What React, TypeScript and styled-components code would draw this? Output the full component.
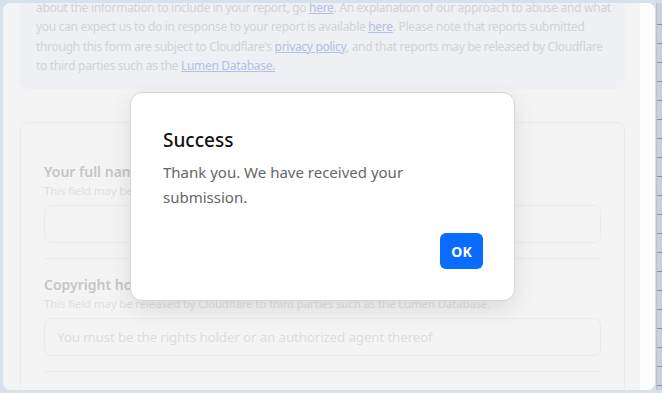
import styled, { createGlobalStyle } from "styled-components";

const GlobalStyle = createGlobalStyle`
	html, body {
		margin: 0;
		padding: 0;
		background: #d7e1ea;
		font-family: "Noto Sans", "Open Sans", sans-serif;
	}
`;

const Frame = styled.div`
	height: 393px;
	box-sizing: border-box;
	padding: 3px 0 3px 3px;
	display: flex;
	gap: 1px;
`;

const Window = styled.div`
	flex: 1;
	display: flex;
	background: #fdfdfd;
	border-radius: 8px;
	overflow: hidden;
	position: relative;
`;

const Page = styled.div`
	flex: 1;
	background: #f4f4f4;
	padding: 0 15px 0 17px;
	overflow: hidden;
`;

const ScrollTrack = styled.div`
	width: 15px;
	background: #fdfdfd;
`;

const Ruler = styled.div`
	width: 5px;
	background: repeating-linear-gradient(
		to bottom,
		#c8d2dc 0,
		#c8d2dc 18px,
		#8a9099 18px,
		#8a9099 19px
	);
	background-position: 0 3px;
	border-left: 1px solid #b9c3cd;
`;

const InfoCard = styled.div`
	margin-top: -22px;
	background: #eef0f3;
	border-radius: 8px;
	padding: 17px 16px 14px;
	color: #d3d3d3;
	font-size: 12px;
	letter-spacing: -0.3px;
	line-height: 19.3px;
	white-space: nowrap;
`;

const Link = styled.a`
	color: #b3bfe6;
	text-decoration: underline;
`;

const FormCard = styled.div`
	margin-top: 33px;
	border: 1px solid #ebebeb;
	border-radius: 8px;
	padding: 22px 23px 40px;
`;

const Field = styled.div`
	padding: 17px 0 15px;
	border-bottom: 1px solid #ebebeb;

	& + & {
		padding-top: 16px;
	}
`;

const Label = styled.div`
	font-size: 14px;
	line-height: 20px;
	font-weight: 600;
	color: #c6c6c6;
`;

const Hint = styled.div`
	font-size: 11.5px;
	letter-spacing: -0.15px;
	line-height: 17px;
	color: #dedede;
`;

const Input = styled.div`
	margin-top: 6px;
	height: 36px;
	border: 1px solid #ebebeb;
	border-radius: 7px;
	padding: 0 12px;
	display: flex;
	align-items: center;
	font-size: 13.4px;
	letter-spacing: -0.15px;
	color: #dddddd;
`;

const Modal = styled.div`
	position: absolute;
	left: 127px;
	top: 89px;
	width: 385px;
	height: 209px;
	box-sizing: border-box;
	background: #ffffff;
	border: 1px solid #d4d4d4;
	border-radius: 12px;
	box-shadow: 0 8px 24px rgba(0, 0, 0, 0.1);
	padding: 33px 31px 31px 32px;
	display: flex;
	flex-direction: column;
`;

const Title = styled.h2`
	margin: 0;
	font-size: 19px;
	line-height: 28px;
	font-weight: 500;
	color: #111111;
`;

const Message = styled.p`
	margin: 6px 0 0;
	font-size: 15px;
	line-height: 25px;
	color: #666666;
	max-width: 300px;
`;

const Actions = styled.div`
	margin-top: auto;
	display: flex;
	justify-content: flex-end;
`;

const OkButton = styled.button`
	width: 43px;
	height: 36px;
	border: none;
	border-radius: 6px;
	background: #0a6cff;
	color: #ffffff;
	font-family: inherit;
	font-size: 14px;
	font-weight: 700;
	cursor: pointer;
`;

const App = () => {
	return (
		<>
			<GlobalStyle />
			<Frame>
				<Window>
					<Page>
						<InfoCard>
							about the information to include in your report, go <Link>here</Link>. An explanation of our approach to abuse and what
							<br />
							you can expect us to do in response to your report is available <Link>here</Link>. Please note that reports submitted
							<br />
							through this form are subject to Cloudflare's <Link>privacy policy</Link>, and that reports may be released by Cloudflare
							<br />
							to third parties such as the <Link>Lumen Database.</Link>
						</InfoCard>
						<FormCard>
							<Field>
								<Label>Your full name</Label>
								<Hint>This field may be released by Cloudflare to third parties such as the Lumen Database.</Hint>
								<Input />
							</Field>
							<Field>
								<Label>Copyright holder's name</Label>
								<Hint>This field may be released by Cloudflare to third parties such as the Lumen Database.</Hint>
								<Input>You must be the rights holder or an authorized agent thereof</Input>
							</Field>
						</FormCard>
					</Page>
					<ScrollTrack />
					<Modal>
						<Title>Success</Title>
						<Message>Thank you. We have received your submission.</Message>
						<Actions>
							<OkButton>OK</OkButton>
						</Actions>
					</Modal>
				</Window>
				<Ruler />
			</Frame>
		</>
	);
};

export default App;
